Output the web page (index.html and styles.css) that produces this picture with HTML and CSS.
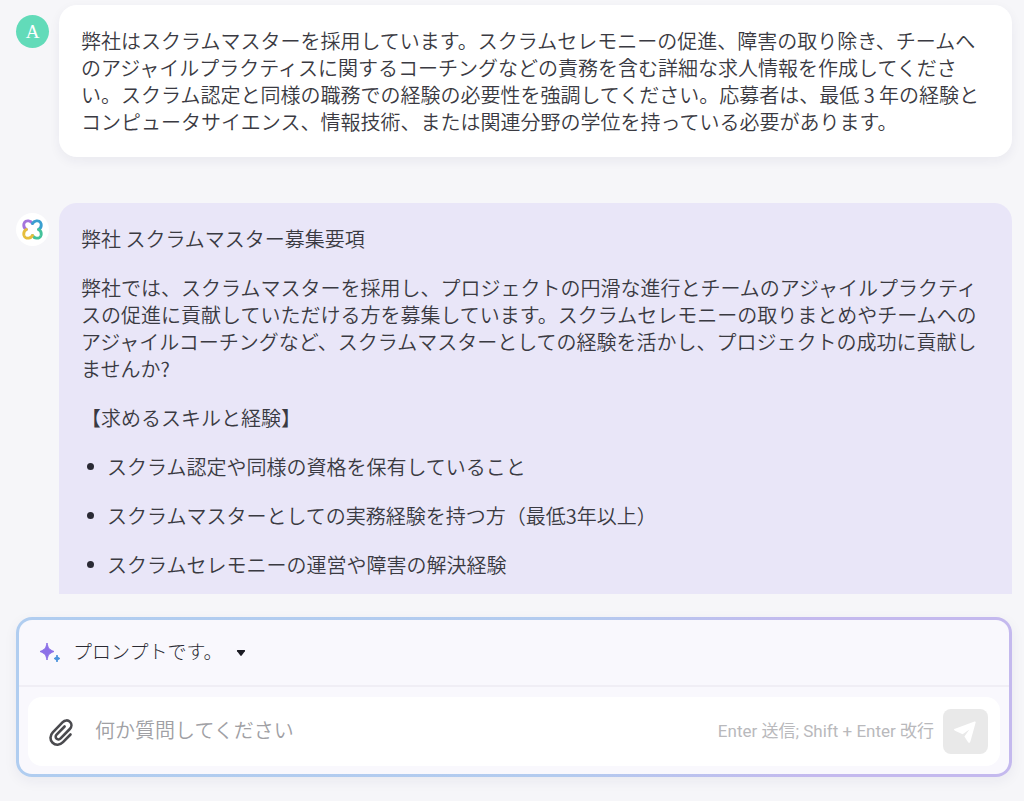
FILE: index.html
```html
<!DOCTYPE html>
<html lang="ja">
<head>
  <meta charset="UTF-8">
  <meta name="viewport" content="width=device-width, initial-scale=1.0">
  <title>AIチャット</title>
  <link rel="stylesheet" href="styles.css">
</head>
<body>
  <main class="chat">
    <article class="message">
      <div class="avatar avatar-user">A</div>
      <div class="bubble bubble-user">
        <p>弊社はスクラムマスターを採用しています。スクラムセレモニーの促進、障害の取り除き、チームへのアジャイルプラクティスに関するコーチングなどの責務を含む詳細な求人情報を作成してください。スクラム認定と同様の職務での経験の必要性を強調してください。応募者は、最低 3 年の経験とコンピュータサイエンス、情報技術、または関連分野の学位を持っている必要があります。</p>
      </div>
    </article>

    <article class="message">
      <div class="avatar avatar-bot">
        <svg width="21" height="21" viewBox="0 0 22 22" fill="none" stroke-width="3" stroke-linecap="round">
          <path d="M4.6 11C2.2 9.6 1.6 7 2 5C2.6 2.6 5 1.6 7 2C9 2.3 10.2 3.4 11 4.8" stroke="#a574dc"/>
          <path d="M11 4.8C11.8 3.4 13 2.3 15 2C17 1.6 19.4 2.6 20 5C20.4 7 19.8 9.6 17.4 11" stroke="#3a9fd0"/>
          <path d="M17.4 11C19.8 12.4 20.4 15 20 17C19.4 19.4 17 20.4 15 20C13 19.7 11.8 18.6 11 17.2" stroke="#43c29a"/>
          <path d="M11 17.2C10.2 18.6 9 19.7 7 20C5 20.4 2.6 19.4 2 17C1.6 15 2.2 12.4 4.6 11" stroke="#e5bd3c"/>
        </svg>
      </div>
      <div class="bubble bubble-bot">
        <p>弊社 スクラムマスター募集要項</p>
        <p>弊社では、スクラムマスターを採用し、プロジェクトの円滑な進行とチームのアジャイルプラクティスの促進に貢献していただける方を募集しています。スクラムセレモニーの取りまとめやチームへのアジャイルコーチングなど、スクラムマスターとしての経験を活かし、プロジェクトの成功に貢献しませんか?</p>
        <p>【求めるスキルと経験】</p>
        <ul>
          <li>スクラム認定や同様の資格を保有していること</li>
          <li>スクラムマスターとしての実務経験を持つ方（最低3年以上）</li>
          <li>スクラムセレモニーの運営や障害の解決経験</li>
        </ul>
      </div>
    </article>
  </main>

  <form class="composer">
    <div class="prompt-bar">
      <svg width="22" height="22" viewBox="0 0 22 22">
        <path d="M8 1C9 6 10 7.6 15 9.5C10 11.4 9 13 8 18C7 13 6 11.4 1 9.5C6 7.6 7 6 8 1Z" fill="#8c70e8" stroke="#8c70e8"/>
        <path d="M18 13C18.5 15 19.2 15.8 21 16.5C19.2 17.2 18.5 18 18 20C17.5 18 16.8 17.2 15 16.5C16.8 15.8 17.5 15 18 13Z" fill="#4a93dc" stroke="#4a93dc"/>
      </svg>
      <select class="prompt-select" aria-label="プロンプト">
        <option>プロンプトです。</option>
      </select>
      <svg class="caret" width="10" height="8" viewBox="0 0 10 8">
        <path d="M1.5 1H8.5Q9.6 1 8.9 2.2L5.7 6.6Q5 7.4 4.3 6.6L1.1 2.2Q.4 1 1.5 1Z" fill="#1c1c24"/>
      </svg>
    </div>
    <div class="input-row">
      <button type="button" class="attach-button" aria-label="ファイルを添付">
        <svg width="26" height="30" viewBox="0 0 26 30" fill="none" stroke="#4a4a4e" stroke-width="2.6" stroke-linecap="round" stroke-linejoin="round">
          <path d="M22.5 17.5L15 25.2C12 28.3 7.5 28.6 4.6 25.8C1.7 23 1.8 18.5 4.8 15.4L14.7 5.2C16.8 3 20 2.8 22 4.8C24 6.8 23.9 9.8 21.8 12L12.6 21.4C11.4 22.7 9.6 22.8 8.5 21.7C7.4 20.6 7.4 18.9 8.6 17.7L16.6 9.5"/>
        </svg>
      </button>
      <input class="question-input" type="text" placeholder="何か質問してください" aria-label="質問">
      <span class="hint">Enter 送信; Shift + Enter 改行</span>
      <button type="submit" class="send-button" aria-label="送信">
        <svg width="25" height="25" viewBox="0 0 25 25" fill="#fff">
          <path d="M21.5 2.6Q23 2.2 22.6 3.8L17.4 22.6Q16.2 25.4 14.6 22.6L11.4 17.4L16.4 10.6L9.6 15.2L2 11.8Q0 10.4 2 9.8Z"/>
        </svg>
      </button>
    </div>
  </form>
</body>
</html>
```

FILE: styles.css
```css
* {
  box-sizing: border-box;
}

body {
  margin: 0;
  height: 100vh;
  display: flex;
  flex-direction: column;
  background: #f6f6f9;
  color: #3a3a42;
  font-family: "Noto Sans CJK JP", sans-serif;
  font-size: 20px;
  font-weight: 350;
  line-height: 27px;
}

p,
ul {
  margin: 0;
}

button,
input,
select {
  border: none;
  padding: 0;
  background: none;
  font: inherit;
}

/* Conversation */
.chat {
  flex: 1;
  min-height: 0;
  overflow: hidden;
  padding: 5px 12px 0 16px;
  display: flex;
  flex-direction: column;
  gap: 46px;
}

.message {
  flex: none;
  display: flex;
  align-items: flex-start;
  gap: 10px;
}

.avatar {
  flex: none;
  width: 33px;
  height: 33px;
  margin-top: 10px;
  border-radius: 50%;
  display: flex;
  align-items: center;
  justify-content: center;
}

.avatar-user {
  background: #62dbb9;
  color: #fff;
  font-family: "Liberation Serif", serif;
  font-size: 19px;
}

.avatar-bot {
  background: #fff;
}

.bubble {
  flex: 1;
  min-width: 0;
  padding: 22px;
  border-radius: 18px;
  display: flex;
  flex-direction: column;
  gap: 22px;
}

.bubble-user {
  background: #fff;
  box-shadow: 0 4px 12px rgba(40, 40, 80, 0.06);
}

.bubble-bot {
  background: #e9e6f8;
  border-radius: 18px 18px 0 0;
}

.bubble ul {
  padding: 0;
  list-style: none;
  display: flex;
  flex-direction: column;
  gap: 22px;
}

.bubble li {
  display: flex;
  align-items: center;
  gap: 13px;
  padding-left: 6px;
}

.bubble li::before {
  content: "";
  width: 7px;
  height: 7px;
  border-radius: 50%;
  background: #2a2a34;
}

/* Composer */
.composer {
  margin: 23px 12px 24px 16px;
  border: 3px solid transparent;
  border-radius: 16px;
  background:
    linear-gradient(#f9f8fd, #f9f8fd) padding-box,
    linear-gradient(90deg, #b0cdf0 0%, #b3cbef 55%, #c4b9ee 80%, #c4b9ee 100%) border-box;
  box-shadow: 0 4px 14px rgba(40, 40, 80, 0.06);
}

.prompt-bar {
  display: flex;
  align-items: center;
  height: 67px;
  padding: 0 20px;
  border-bottom: 2px solid #f0eef5;
}

.prompt-select {
  appearance: none;
  margin-left: 12px;
  padding-bottom: 4px;
  color: #2a2a32;
  font-size: 19px;
  font-weight: 300;
}

.caret {
  margin-left: 12px;
  pointer-events: none;
}

.input-row {
  display: flex;
  align-items: center;
  margin: 10px 9px 8px;
  padding: 12px 12px 12px 20px;
  border-radius: 14px;
  background: #fff;
}

.attach-button {
  display: flex;
  cursor: pointer;
}

.question-input {
  flex: 1;
  min-width: 0;
  margin-left: 21px;
  padding-bottom: 4px;
  outline: none;
  color: #3a3a42;
}

.question-input::placeholder {
  color: #a0a0a4;
  opacity: 1;
}

.hint {
  margin-right: 9px;
  color: #b9b9bc;
  font-family: Roboto, "Noto Sans CJK JP", sans-serif;
  font-size: 17px;
  font-weight: 400;
  white-space: nowrap;
}

.send-button {
  display: flex;
  align-items: center;
  justify-content: center;
  width: 45px;
  height: 45px;
  border-radius: 8px;
  background: #e9e9e9;
  cursor: pointer;
}
```
